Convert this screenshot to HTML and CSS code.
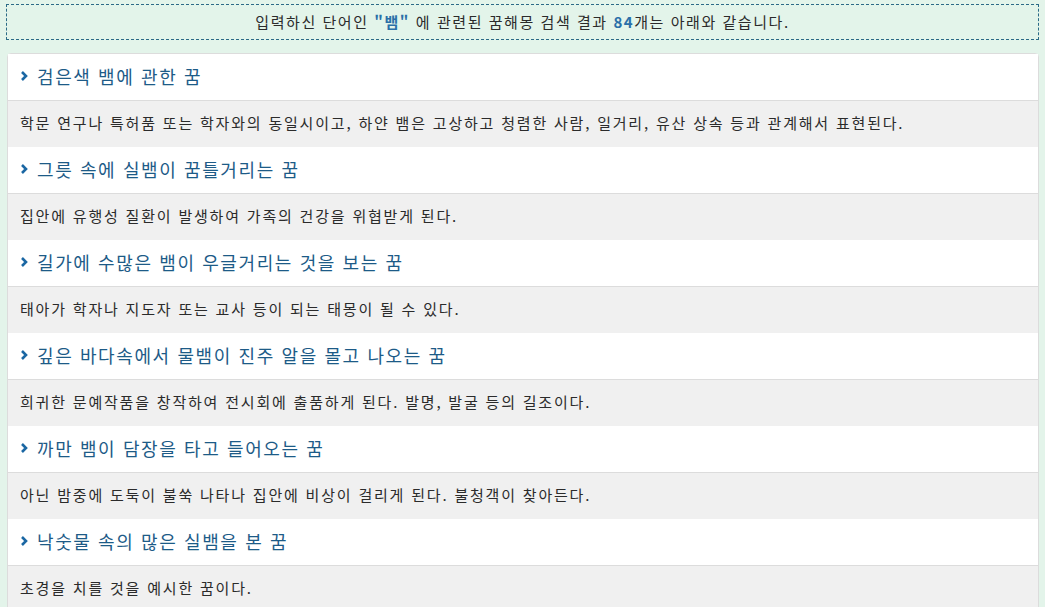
FILE: index.html
```html
<!DOCTYPE html>
<html lang="ko">
<head>
    <meta charset="UTF-8">
    <title>꿈해몽 검색 결과 - 뱀</title>
    <link rel="stylesheet" href="styles.css">
</head>
<body>
    <div class="notice">
        입력하신 단어인 <b>"뱀"</b> 에 관련된 꿈해몽 검색 결과 <b class="count">84</b>개는 아래와 같습니다.
    </div>
    <ul class="dream-list">
        <li>
            <h3><svg class="arrow" viewBox="0 0 8 12"><polyline points="2,2 6,6 2,10"/></svg>검은색 뱀에 관한 꿈</h3>
            <p>학문 연구나 특허품 또는 학자와의 동일시이고, 하얀 뱀은 고상하고 청렴한 사람, 일거리, 유산 상속 등과 관계해서 표현된다.</p>
        </li>
        <li>
            <h3><svg class="arrow" viewBox="0 0 8 12"><polyline points="2,2 6,6 2,10"/></svg>그릇 속에 실뱀이 꿈틀거리는 꿈</h3>
            <p>집안에 유행성 질환이 발생하여 가족의 건강을 위협받게 된다.</p>
        </li>
        <li>
            <h3><svg class="arrow" viewBox="0 0 8 12"><polyline points="2,2 6,6 2,10"/></svg>길가에 수많은 뱀이 우글거리는 것을 보는 꿈</h3>
            <p>태아가 학자나 지도자 또는 교사 등이 되는 태몽이 될 수 있다.</p>
        </li>
        <li>
            <h3><svg class="arrow" viewBox="0 0 8 12"><polyline points="2,2 6,6 2,10"/></svg>깊은 바다속에서 물뱀이 진주 알을 몰고 나오는 꿈</h3>
            <p>희귀한 문예작품을 창작하여 전시회에 출품하게 된다. 발명, 발굴 등의 길조이다.</p>
        </li>
        <li>
            <h3><svg class="arrow" viewBox="0 0 8 12"><polyline points="2,2 6,6 2,10"/></svg>까만 뱀이 담장을 타고 들어오는 꿈</h3>
            <p>아닌 밤중에 도둑이 불쑥 나타나 집안에 비상이 걸리게 된다. 불청객이 찾아든다.</p>
        </li>
        <li>
            <h3><svg class="arrow" viewBox="0 0 8 12"><polyline points="2,2 6,6 2,10"/></svg>낙숫물 속의 많은 실뱀을 본 꿈</h3>
            <p>초경을 치를 것을 예시한 꿈이다.</p>
        </li>
    </ul>
</body>
</html>
```

FILE: styles.css
```css
* {
    margin: 0;
    padding: 0;
    box-sizing: border-box;
}
body {
    background: #e3f4ea;
    font-family: "Noto Sans CJK KR", "Noto Sans", sans-serif;
    color: #333;
    padding: 4px 6px 0 6px;
    overflow: hidden;
}
/* 검색 결과 안내 */
.notice {
    border: 1px dashed #2b6a86;
    height: 36px;
    line-height: 34px;
    text-align: center;
    font-size: 15px;
    letter-spacing: 1.55px;
    color: #2b2b2b;
}
.notice b {
    color: #2a6fa8;
}
/* 꿈 목록 */
.dream-list {
    list-style: none;
    margin: 13px 0 0 1px;
    background: #fff;
    border: 1px solid #dcdcdc;
    border-radius: 4px 4px 0 0;
}
.dream-list h3 {
    display: flex;
    align-items: center;
    height: 47px;
    padding: 0 0 2px 12px;
    font-size: 18px;
    font-weight: normal;
    letter-spacing: 1.6px;
    color: #1d5b87;
    background: #fff;
    border-bottom: 1px solid #dcdcdc;
}
.dream-list .arrow {
    width: 8px;
    height: 12px;
    margin-right: 9px;
    fill: none;
    stroke: #1b67a3;
    stroke-width: 2.6;
}
.dream-list p {
    height: 46px;
    line-height: 44px;
    padding-left: 12px;
    font-size: 15px;
    letter-spacing: 1.8px;
    background: #f0f0f0;
    color: #2b2b2b;
}
```
